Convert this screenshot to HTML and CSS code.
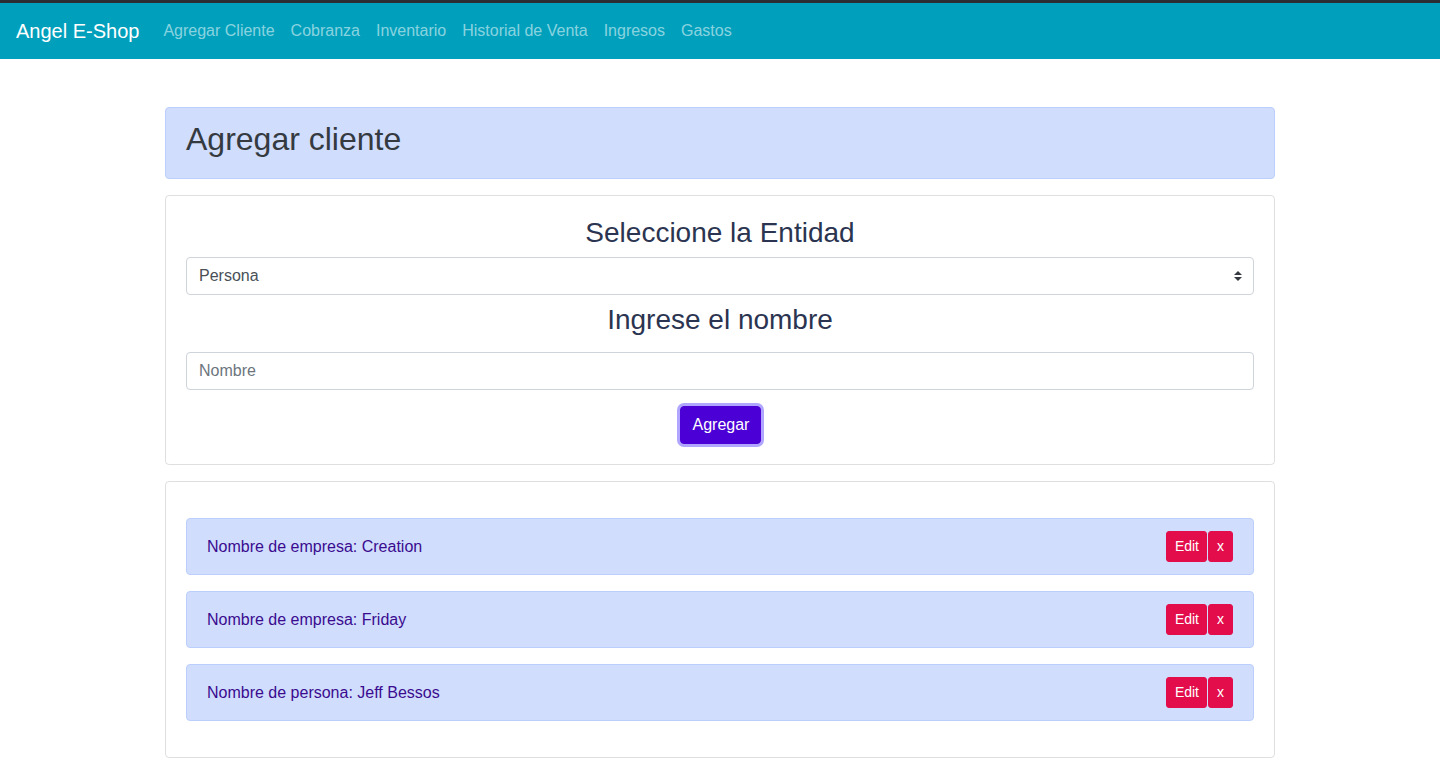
FILE: index.html
```html
<!DOCTYPE html>
<html lang="es">
<head>
<meta charset="utf-8">
<title>Angel E-Shop</title>
<link rel="stylesheet" href="styles.css">
</head>
<body>
<nav class="navbar">
  <a class="brand" href="#">Angel E-Shop</a>
  <ul class="nav">
    <li><a href="#">Agregar Cliente</a></li>
    <li><a href="#">Cobranza</a></li>
    <li><a href="#">Inventario</a></li>
    <li><a href="#">Historial de Venta</a></li>
    <li><a href="#">Ingresos</a></li>
    <li><a href="#">Gastos</a></li>
  </ul>
</nav>
<main class="container">
  <div class="page-alert">
    <h2 class="page-title">Agregar cliente</h2>
  </div>
  <section class="card">
    <div class="card-body form-body">
      <h3 class="form-heading">Seleccione la Entidad</h3>
      <div class="select-wrap">
        <select class="control select">
          <option>Persona</option>
          <option>Empresa</option>
        </select>
        <svg class="select-arrows" width="8" height="10" viewBox="0 0 4 5"><path d="M2 0L0 2h4zm0 5L0 3h4z" fill="#343a40"/></svg>
      </div>
      <h3 class="form-heading second">Ingrese el nombre</h3>
      <input class="control" type="text" placeholder="Nombre">
      <div class="actions">
        <button class="btn-primary" type="button">Agregar</button>
      </div>
    </div>
  </section>
  <section class="card">
    <div class="card-body list-body">
      <div class="item">
        <span class="item-text">Nombre de empresa: Creation</span>
        <div class="item-buttons"><button class="btn-danger">Edit</button><button class="btn-danger">x</button></div>
      </div>
      <div class="item">
        <span class="item-text">Nombre de empresa: Friday</span>
        <div class="item-buttons"><button class="btn-danger">Edit</button><button class="btn-danger">x</button></div>
      </div>
      <div class="item">
        <span class="item-text">Nombre de persona: Jeff Bessos</span>
        <div class="item-buttons"><button class="btn-danger">Edit</button><button class="btn-danger">x</button></div>
      </div>
    </div>
  </section>
</main>
</body>
</html>
```
FILE: styles.css
```css
* { box-sizing: border-box; }
html, body { margin: 0; padding: 0; }
body {
  font-family: "Liberation Sans", Arial, sans-serif;
  font-size: 16px;
  line-height: 1.5;
  color: #212529;
  background: #fff;
}
.navbar {
  border-top: 3px solid #2b2f33;
  background: #00a0bc;
  height: 59px;
  padding: 8px 16px;
  display: flex;
  align-items: center;
}
.brand {
  color: #fff;
  font-size: 20px;
  line-height: 30px;
  text-decoration: none;
  margin-right: 16px;
}
.nav {
  list-style: none;
  margin: 0;
  padding: 0;
  display: flex;
}
.nav a {
  display: block;
  padding: 8px;
  color: rgba(255,255,255,0.55);
  text-decoration: none;
  line-height: 24px;
}
.container {
  width: 1110px;
  margin: 48px auto 0;
}
.page-alert {
  background: #d0ddfd;
  border: 1px solid #bccffc;
  border-radius: 4px;
  padding: 12px 20px 20px;
  margin-bottom: 16px;
}
.page-title {
  margin: 0;
  font-size: 32px;
  font-weight: 400;
  line-height: 38px;
  color: #343a40;
}
.card {
  border: 1px solid rgba(0,0,0,0.125);
  border-radius: 4px;
  margin-bottom: 16px;
}
.card-body { padding: 20px; }
.form-heading {
  margin: 0 0 7px;
  text-align: center;
  font-size: 28px;
  font-weight: 400;
  line-height: 34px;
  color: #2b3450;
}
.form-heading.second {
  margin-top: 8px;
  margin-bottom: 15px;
}
.select-wrap { position: relative; }
.control {
  display: block;
  width: 100%;
  height: 38px;
  padding: 6px 12px;
  font-family: inherit;
  font-size: 16px;
  line-height: 24px;
  color: #495057;
  background: #fff;
  border: 1px solid #ced4da;
  border-radius: 4px;
  outline: none;
}
.control::placeholder { color: #6c757d; }
.select {
  -webkit-appearance: none;
  appearance: none;
  padding-right: 32px;
}
.select-arrows {
  position: absolute;
  right: 12px;
  top: 14px;
  pointer-events: none;
}
.actions {
  display: flex;
  justify-content: center;
  margin-top: 16px;
}
.btn-primary {
  width: 81px;
  height: 38px;
  font-family: inherit;
  font-size: 16px;
  line-height: 24px;
  color: #fff;
  background: #4b00d5;
  border: 1px solid #4b00d5;
  border-radius: 4px;
  box-shadow: 0 0 0 3px #b1a6ff;
  padding: 6px 12px;
}
.list-body { padding: 36px 20px; }
.item {
  display: flex;
  justify-content: space-between;
  align-items: center;
  background: #d0ddfd;
  border: 1px solid #bccffc;
  border-radius: 4px;
  padding: 12px 20px;
  margin-bottom: 16px;
}
.item:last-child { margin-bottom: 0; }
.item-text {
  color: #3a0b8f;
  line-height: 31px;
}
.item-buttons { display: flex; gap: 1px; }
.btn-danger {
  height: 31px;
  padding: 4px 8px;
  font-family: inherit;
  font-size: 14px;
  line-height: 21px;
  color: #fff;
  background: #e20d4a;
  border: 1px solid #e20d4a;
  border-radius: 3px;
}
.btn-danger:first-child { padding: 4px 7px 4px 8px; }
```
